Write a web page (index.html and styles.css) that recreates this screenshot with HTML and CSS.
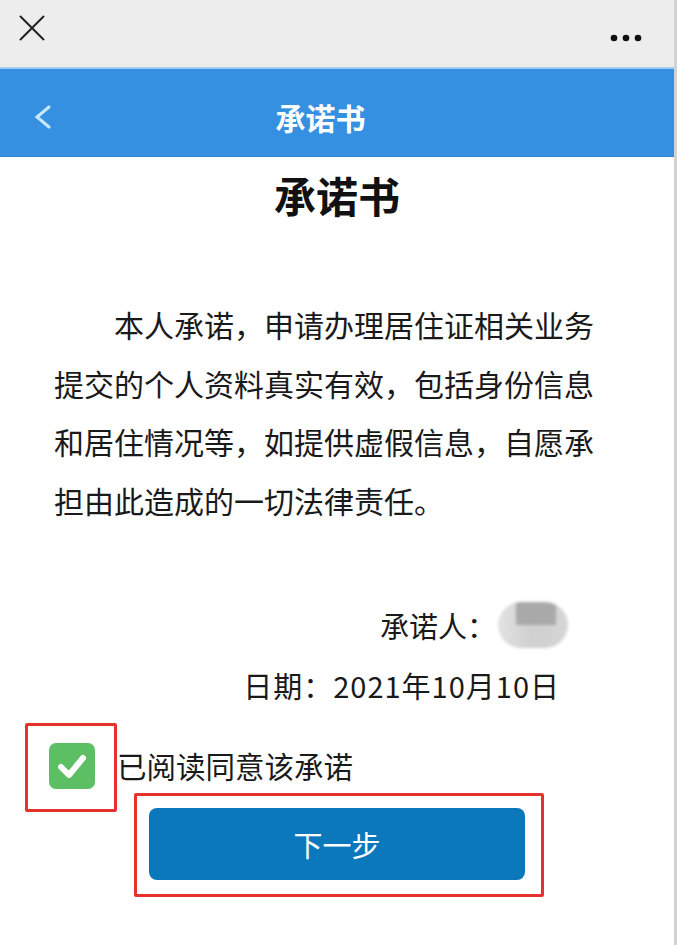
FILE: index.html
```html
<!DOCTYPE html>
<html lang="zh-CN">
<head>
  <meta charset="UTF-8" />
  <meta name="viewport" content="width=device-width, initial-scale=1.0"/>
  <title>承诺书</title>
  <link rel="stylesheet" href="styles.css">
</head>
<body>

  <div class="page">
    <div class="topbar">
      <svg class="close" width="26" height="26" viewBox="0 0 26 26">
        <path d="M1 1 L25 25 M25 1 L1 25" stroke="#222" stroke-width="2" fill="none"/>
      </svg>
      <svg class="more" width="32" height="8" viewBox="0 0 32 8">
        <circle cx="4" cy="4" r="3.3" fill="#111"/>
        <circle cx="16" cy="4" r="3.3" fill="#111"/>
        <circle cx="28" cy="4" r="3.3" fill="#111"/>
      </svg>
    </div>

    <div class="header">
      <svg class="back" width="18" height="24" viewBox="0 0 18 24">
        <polyline points="15,2 3,12 15,22" stroke="#c8e8ff" stroke-width="3" stroke-linecap="round" fill="none"/>
      </svg>
      <div class="header-title">承诺书</div>
    </div>

    <div class="content">
      <h1>承诺书</h1>
      <p class="pledge">本人承诺，申请办理居住证相关业务提交的个人资料真实有效，包括身份信息和居住情况等，如提供虚假信息，自愿承担由此造成的一切法律责任。</p>

      <div class="sign">
        <div class="sign-row name">承诺人：<span class="masked"></span></div>
        <div class="sign-row date">日期：2021年10月10日</div>
      </div>

      <div class="agree">
        <div class="checkbox">
          <svg width="46" height="46" viewBox="0 0 46 46">
            <path d="M12 24 L20 32 L34 15" stroke="#fff" stroke-width="6" stroke-linecap="round" stroke-linejoin="round" fill="none"/>
          </svg>
        </div>
        <span class="agree-text">已阅读同意该承诺</span>
      </div>

      <div class="next-wrap">
        <button class="next">下一步</button>
      </div>
    </div>
  </div>

</body>
</html>
```

FILE: styles.css
```css
* {
  box-sizing: border-box;
  font-family: "Noto Sans CJK SC", "Noto Sans", sans-serif;
}

body {
  margin: 0;
  background: #fff;
  color: #1a1a1a;
}

.page {
  width: 677px;
  min-height: 100vh;
  border-right: 3px solid #d2d2d2;
}

.topbar {
  height: 69px;
  background: #ededed;
  display: flex;
  justify-content: space-between;
  padding: 15px 32px 0 19px;
  border-bottom: 2px solid #9ccff3;
}

.more {
  margin-top: 19px;
}

.header {
  height: 88px;
  background: #3590e1;
  border-bottom: 1px solid #2f82cc;
  display: flex;
  align-items: center;
  padding: 8px 0 0 34px;
}

.header-title {
  flex: 1;
  text-align: center;
  color: #fff;
  font-size: 30px;
  font-weight: bold;
  padding-right: 85px;
}

.content {
  padding-bottom: 40px;
}

h1 {
  margin: 13px 0 0;
  text-align: center;
  font-size: 42px;
  line-height: 50px;
  font-weight: bold;
  color: #111;
}

.pledge {
  margin: 75px 0 0;
  padding: 0 70px 0 54px;
  font-size: 30px;
  line-height: 58.5px;
  text-indent: 60px;
}

.sign {
  margin-top: 66px;
  font-size: 29px;
}

.sign-row {
  display: flex;
  justify-content: flex-end;
  align-items: center;
  height: 60px;
}

.sign-row.name {
  padding-right: 106px;
}

.sign-row.date {
  padding-right: 114px;
  letter-spacing: 1px;
}

.masked {
  display: inline-block;
  width: 70px;
  height: 46px;
  border-radius: 23px;
  margin-left: 2px;
  background:
    linear-gradient(to bottom, #a9a9a9 0 50%, transparent 50%) 18px 0 / 40px 100% no-repeat,
    linear-gradient(to right, #e2e2e2, #cfcfcf 50%, #d6d6d6);
  filter: blur(1.5px);
}

.agree {
  display: flex;
  align-items: center;
  gap: 23px;
  padding-left: 49px;
  margin-top: 28px;
}

.checkbox {
  position: relative;
  width: 46px;
  height: 46px;
  border-radius: 7px;
  background: #5cbf63;
}

/* red frame marking the checkbox */
.checkbox::after {
  content: "";
  position: absolute;
  top: -20px;
  left: -24px;
  right: -22px;
  bottom: -23px;
  border: 3px solid #e5332b;
  border-radius: 2px;
}

.agree-text {
  font-size: 29.5px;
  margin-left: -1px;
  margin-top: -3px;
}

.next-wrap {
  width: 410px;
  margin: 4px 0 0 134px;
  padding: 12px 16px 14px 12px;
  border: 3px solid #e5332b;
  border-radius: 2px;
}

.next {
  width: 100%;
  height: 72px;
  border: none;
  border-radius: 8px;
  background: #0b78bc;
  color: #fff;
  font-size: 29px;
  cursor: pointer;
}
```
